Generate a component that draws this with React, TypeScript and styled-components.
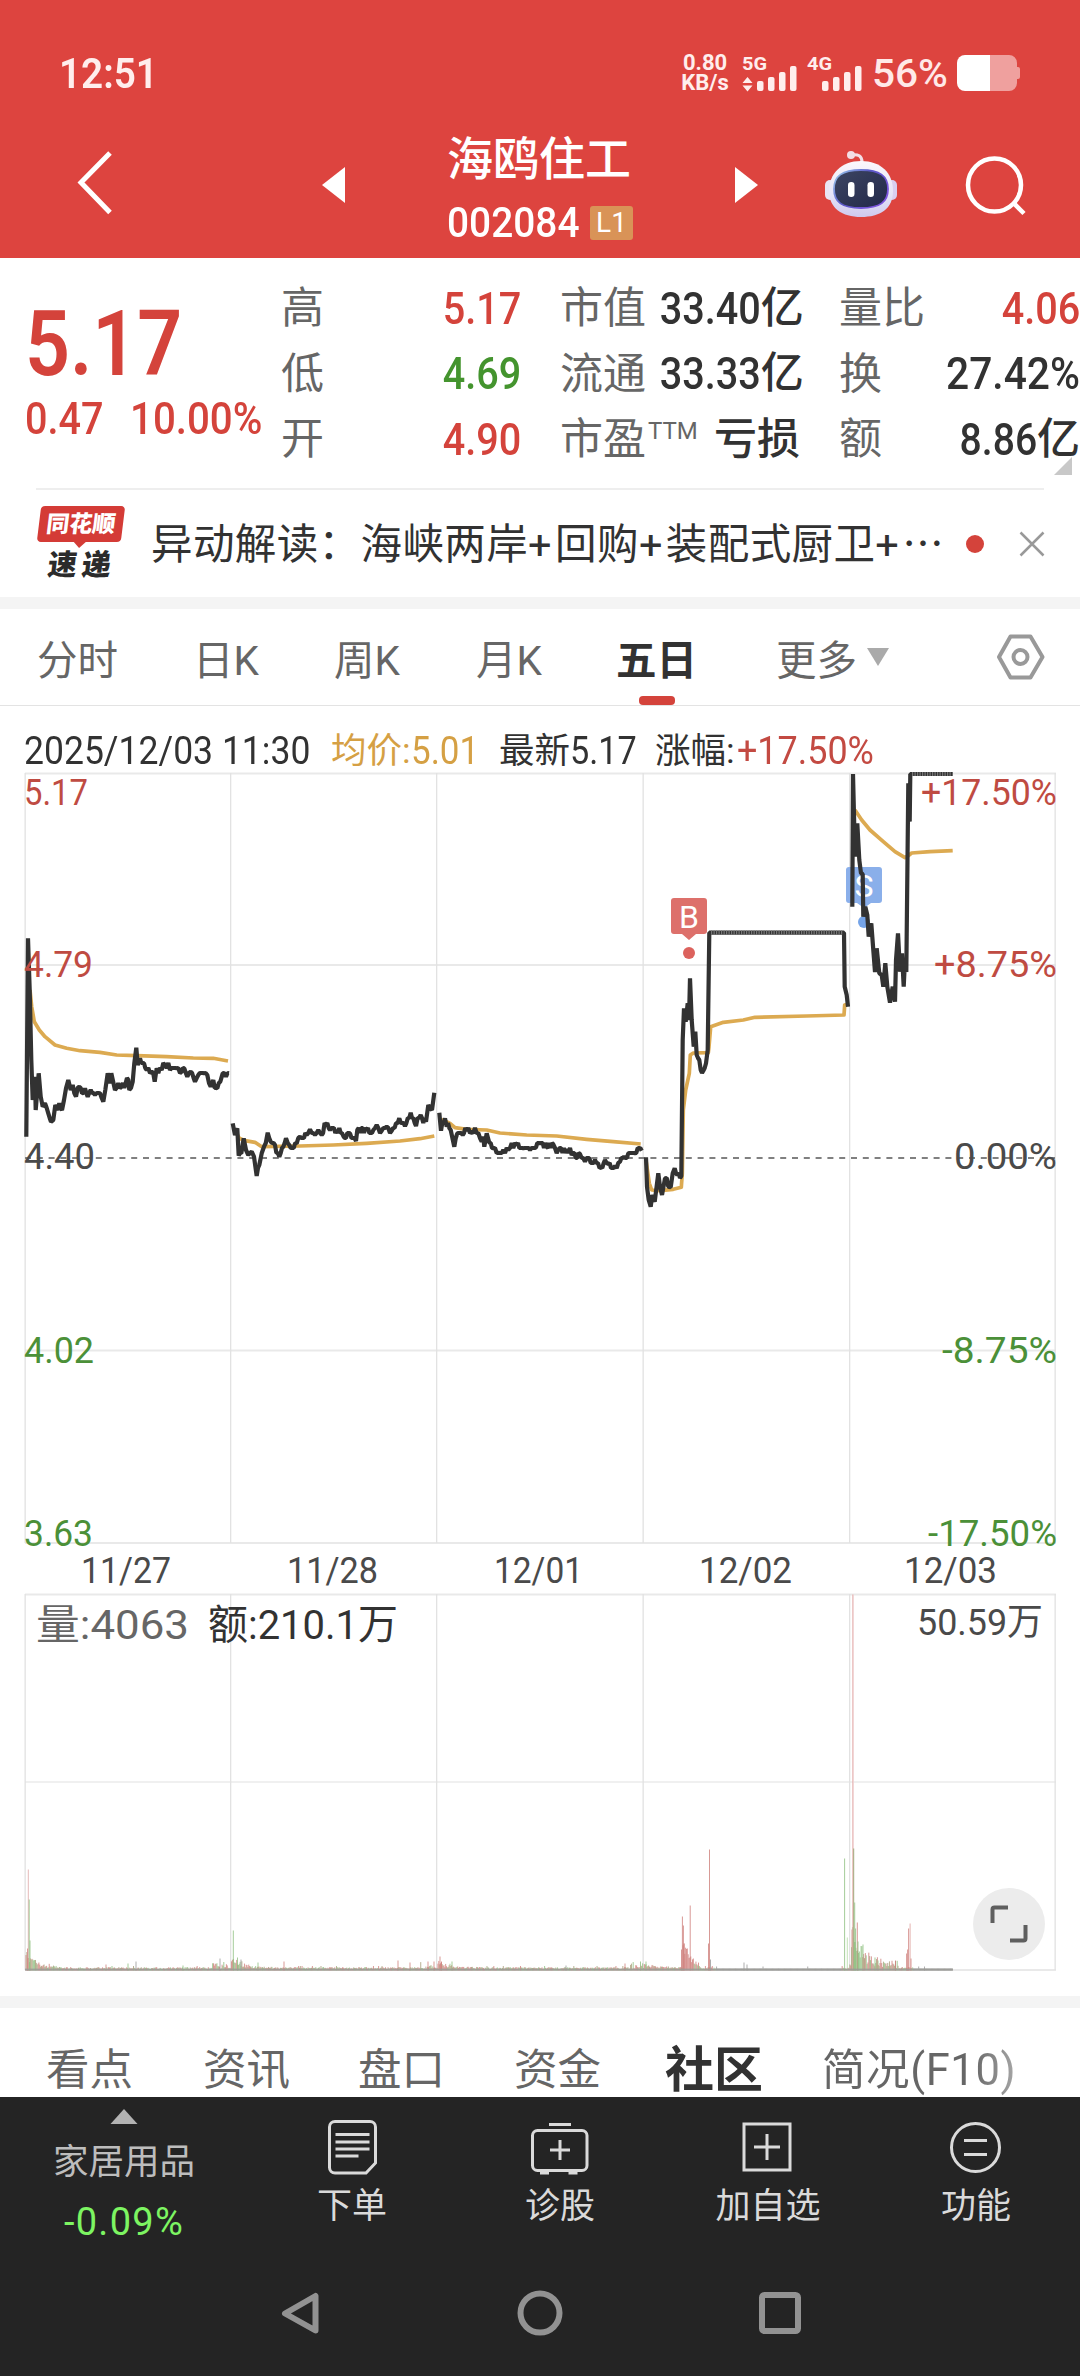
import React from "react";
import styled, { createGlobalStyle } from "styled-components";

const FONT = `Roboto, "Noto Sans CJK SC", sans-serif`;
const RED = "#d4433b";
const GREEN = "#44942e";
const INK = "#323232";
const GRAY = "#666666";

const Global = createGlobalStyle`
  * { box-sizing: border-box; }
  body { margin: 0; background: #fff; font-family: ${FONT}; }
  svg { display: block; flex: none; }
`;

const Screen = styled.div`
  width: 1080px;
  height: 2376px;
  display: flex;
  flex-direction: column;
  overflow: hidden;
  background: #fff;
  white-space: pre;
`;

/* Condensed text: numerals are squeezed horizontally toward one side */
const Num = styled.span<{ $size: number; $sx?: number; $from?: string; $weight?: number; $color?: string }>`
  display: inline-block;
  font-size: ${(p) => p.$size}px;
  font-weight: ${(p) => p.$weight ?? 500};
  color: ${(p) => p.$color ?? "inherit"};
  line-height: 1;
  transform: scaleX(${(p) => p.$sx ?? 1});
  transform-origin: ${(p) => p.$from ?? "left"} center;
`;

/* ---------- status bar + title ---------- */
const Top = styled.header`
  height: 258px;
  flex: none;
  background: #dd443f;
  color: #fff;
`;
const StatusBar = styled.div`
  height: 130px;
  padding: 16px 58px 0 59px;
  display: flex;
  align-items: center;
  color: #ffeeed;
`;
const Speed = styled.div`
  margin-left: auto;
  display: flex;
  flex-direction: column;
  align-items: center;
  width: 48px;
  margin-right: 13px;
  font-weight: 700;
  font-size: 22px;
  line-height: 20px;
`;
const TitleBar = styled.div`
  height: 110px;
  display: grid;
  grid-template-columns: 322px 125px 288px 88px 138px 1fr;
  align-items: center;
`;
const BackCell = styled.div`
  padding-left: 72px;
`;
const TitleBlock = styled.div`
  height: 110px;
  padding-top: 4px;
  display: flex;
  flex-direction: column;
  gap: 18px;
`;
const Name = styled.div`
  font-size: 46px;
  line-height: 50px;
  font-weight: 500;
`;
const CodeLine = styled.div`
  display: grid;
  grid-template-columns: 143px 43px;
  align-items: center;
  height: 40px;
`;
const Level = styled.span`
  height: 34px;
  border-radius: 3px;
  background: #d99357;
  font-size: 28px;
  line-height: 34px;
  text-align: center;
`;

/* ---------- quote ---------- */
const Quote = styled.section`
  position: relative;
  height: 230px;
  flex: none;
  display: flex;
`;
const PriceBlock = styled.div`
  width: 281px;
  padding: 42px 0 0 25px;
  color: ${RED};
`;
const ChangeLine = styled.div`
  display: grid;
  grid-template-columns: 105px 1fr;
  padding-top: 6px;
  line-height: 1;
`;
const Stats = styled.div`
  display: grid;
  grid-template-columns: 240px 240px 241px;
  column-gap: 39px;
  grid-auto-rows: 65.5px;
  padding-top: 17px;
`;
const Stat = styled.div`
  display: flex;
  align-items: center;
  justify-content: space-between;
  font-size: 43px;
  color: ${GRAY};
`;
const StatLabel = styled.span`
  line-height: 65px;
  padding-top: 2px;
`;
const Ttm = styled.sup`
  font-size: 24px;
  line-height: 0;
  vertical-align: 15px;
  margin-left: 2px;
`;
const StatValue = styled.span<{ $color?: string }>`
  display: flex;
  align-items: center;
  font-weight: 500;
  line-height: 65px;
  padding-top: 1px;
  color: ${(p) => p.$color ?? INK};
`;
const Corner = styled.div`
  position: absolute;
  left: 1054px;
  top: 199px;
  width: 18px;
  height: 18px;
  background: #c8c8c8;
  clip-path: polygon(100% 0, 100% 100%, 0 100%);
`;

/* ---------- news ---------- */
const News = styled.section`
  height: 109px;
  flex: none;
  margin: 0 36px;
  border-top: 2px solid #eeeeee;
  display: grid;
  grid-template-columns: 115px 1fr 53px 25px;
  align-items: center;
`;
const Logo = styled.div`
  position: relative;
  width: 90px;
  height: 76px;
`;
const LogoTop = styled.div`
  position: relative;
  height: 36px;
  width: 84px;
  margin-left: 3px;
  border-radius: 4px;
  background: #d43b36;
  color: #fff;
  font-weight: 900;
  font-size: 23px;
  line-height: 37px;
  text-align: center;
  transform: skewX(-7deg);
  &::after {
    content: "";
    position: absolute;
    left: 36px;
    top: 35px;
    border: 7px solid transparent;
    border-top-color: #d43b36;
    border-bottom: 0;
  }
`;
const LogoBottom = styled.div`
  padding-left: 12px;
  font-weight: 900;
  font-size: 29px;
  line-height: 46px;
  letter-spacing: 5px;
  color: #2b2b2b;
  transform: skewX(-7deg);
`;
const Headline = styled.div`
  font-size: 41.5px;
  line-height: 56px;
  letter-spacing: 0.4px;
  padding-top: 2px;
  color: ${INK};
`;
const Plus = styled.span`
  letter-spacing: 3.4px;
`;
const Dot = styled.span`
  width: 18px;
  height: 18px;
  border-radius: 50%;
  background: ${RED};
`;
const Band = styled.div`
  height: 12px;
  flex: none;
  background: #f4f4f4;
`;

/* ---------- period tabs ---------- */
const Periods = styled.nav`
  height: 97px;
  flex: none;
  padding-left: 37px;
  border-bottom: 1px solid #e3e3e3;
  display: grid;
  grid-template-columns: 156px 141px 142px 140px 160px 220px 1fr;
  align-items: center;
`;
const Period = styled.div<{ $on?: boolean }>`
  position: relative;
  height: 96px;
  display: flex;
  align-items: center;
  gap: 9px;
  font-size: 40.5px;
  color: ${(p) => (p.$on ? INK : GRAY)};
  font-weight: ${(p) => (p.$on ? 700 : 400)};
  &::after {
    content: "";
    display: ${(p) => (p.$on ? "block" : "none")};
    position: absolute;
    left: 23px;
    bottom: 0;
    width: 36px;
    height: 9px;
    border-radius: 4px;
    background: ${RED};
  }
`;
const Info = styled.div`
  height: 66px;
  flex: none;
  padding: 24px 0 0 24px;
  display: grid;
  grid-template-columns: 307px 168px 156px 82px 1fr;
  align-items: center;
  font-size: 35.5px;
  color: ${INK};
`;
const InfoItem = styled.span<{ $color?: string }>`
  color: ${(p) => p.$color ?? INK};
  display: flex;
  align-items: center;
  line-height: 42px;
`;

/* ---------- section tabs ---------- */
const Sections = styled.nav`
  height: 89px;
  flex: none;
  padding: 36px 0 0 46px;
  display: grid;
  grid-template-columns: 157px 155px 156px 151px 157px 1fr;
`;
const Section = styled.div<{ $on?: boolean; $fade?: boolean }>`
  font-size: ${(p) => (p.$on ? 49 : 43.5)}px;
  font-weight: ${(p) => (p.$on ? 700 : 400)};
  line-height: 53px;
  color: ${(p) => (p.$on ? INK : GRAY)};
  ${(p) => p.$fade && "width: 200px; letter-spacing: 0.6px; background: linear-gradient(90deg, #666 75%, #aaa 98%); background-clip: text; color: transparent;"}
`;

/* ---------- bottom ---------- */
const Actions = styled.footer`
  height: 153px;
  flex: none;
  background: #242424;
  display: grid;
  grid-template-columns: 248px repeat(4, 208px);
`;
const Action = styled.div`
  display: flex;
  flex-direction: column;
  align-items: center;
  padding-top: 20px;
  color: #dadada;
  font-size: 35px;
  line-height: 44px;
`;
const ActionLabel = styled.div`
  padding-top: 6px;
`;
const Industry = styled.div`
  display: flex;
  flex-direction: column;
  align-items: center;
  padding-top: 12px;
  color: #bdbdbd;
  font-size: 35.5px;
  line-height: 44px;
`;
const IndustryName = styled.div`
  padding-top: 16px;
`;
const IndustryChange = styled.div`
  padding-top: 16px;
  font-size: 38px;
  letter-spacing: 1.3px;
  color: #7df562;
`;
const SystemNav = styled.div`
  height: 126px;
  flex: none;
  background: #242424;
  display: grid;
  grid-template-columns: repeat(3, 240px);
  justify-content: center;
  justify-items: center;
  align-items: center;
`;

/* ---------- chart data ---------- */
type P = [number, number];
/* Points are kept in thirds of a pixel relative to a local origin */
const at = (ox: number, oy: number, s: string): P[] =>
  s.trim().split(/\s+/).map((t) => {
    const [x, y] = t.split(",").map(Number);
    return [ox + x / 3, oy + y / 3] as P;
  });

const noise = (i: number) => {
  const v = Math.sin(i * 127.1 + 11.7) * 43758.5453;
  return v - Math.floor(v) - 0.5;
};

/* Minute samples snapped to the 0.01 price tick (5px); limit-up stretches stay flat */
const ticks = (pts: P[]): string => {
  const out: string[] = [];
  pts.forEach((p, i) => {
    out.push(`${p[0].toFixed(1)},${p[1].toFixed(1)}`);
    const q = pts[i + 1];
    if (!q || Math.abs(q[1] - p[1]) > 14 || q[0] - p[0] > 30) return;
    const n = Math.floor((q[0] - p[0]) / 1.29);
    for (let k = 1; k < n; k++) {
      const x = p[0] + ((q[0] - p[0]) * k) / n;
      const y = p[1] + ((q[1] - p[1]) * k) / n + noise(x) * 6;
      const yy = 1158 + Math.round((y - 1158) / 5) * 5;
      out.push(`${x.toFixed(1)},${yy}`);
    }
  });
  return out.join(" ");
};
const line = (pts: P[]) => pts.map((p) => p.map((v) => v.toFixed(1)).join(",")).join(" ");

const PRICE: P[][] = [
  at(0, 760, "79,1130 84,535 89,690 94,900 98,1020 105,950 107,1050 116,940 122,1010 128,1040 135,1030 145,1060 153,1085 160,1080 166,1035 173,1050 178,1030 186,1050 192,1020 198,985 205,960 212,990 218,975 228,1010 238,980 246,1000 255,985 263,1010 272,990 285,1005 300,1000 310,1025 316,990 323,940 330,970 334,940 345,990 355,970 365,980 385,960 388,990 398,965 403,910 409,863 413,915 420,895 432,910 440,930 455,935 464,965 470,925 485,930 495,915 510,930 530,925 545,935 553,925 562,950 572,935 585,965 595,945 612,940 622,945 632,980 640,960 652,985 661,965 668,940 678,950 687,940"),
  at(0, 760, "698,1090 705,1125 712,1105 716,1187 724,1180 731,1135 738,1170 745,1185 755,1175 762,1190 770,1248 778,1215 785,1180 792,1160 803,1118 812,1145 825,1155 838,1190 850,1160 858,1135 868,1155 890,1150 900,1130 920,1125 930,1108 945,1125 955,1110 965,1125 978,1094 990,1110 1010,1110 1030,1128 1050,1120 1068,1143 1072,1110 1100,1110 1120,1110 1130,1095 1145,1112 1160,1100 1175,1112 1188,1090 1198,1075 1215,1098 1232,1058 1248,1098 1262,1065 1278,1085 1285,1035 1296,1050 1303,998"),
  at(420, 960, "58,458 63,512 75,475 80,500 92,510 103,560 112,520 128,525 140,512 155,515 170,520 185,545 190,530 193,560 200,520 208,548 220,565 235,578 250,570 265,570 275,550 290,555 310,565 330,570 348,562 360,550 380,560 400,553 415,570 440,568 455,585 480,582 495,605 525,600 543,622 555,600 565,612 585,618 600,605 612,590 625,580 645,580 657,565 665,572"),
  [
    ...at(420, 960, "678,592 681,680 686,720 692,740 697,705 704,725 715,640 720,680 726,705 735,655 745,680 752,682 758,640 764,625 772,645 784,648 788,240 792,145 797,185 803,130 807,180 810,55 815,180 821,260 826,215 830,285 838,300 842,330 850,332 858,310 863,270"),
    ...at(640, 760, "208,518 612,518 614,680 620,705 624,740"),
  ],
  at(640, 760, "637,440 639,42 645,290 652,190 658,300 663,340 668,342 670,470 676,440 682,465 686,530 694,490 700,570 705,636 710,565 718,640 725,645 730,680 736,610 742,680 750,728 758,680 765,725 768,600 774,520 780,635 786,580 791,680 795,600 799,636 805,70 809,185 811,42 938,42"),
];
const AVERAGE: P[][] = [
  at(0, 760, "90,690 95,740 103,785 118,810 135,830 165,855 200,865 240,872 300,877 350,885 410,887 500,890 580,894 640,895 684,903"),
  at(0, 760, "705,1110 718,1135 735,1142 765,1147 785,1160 900,1158 1000,1155 1100,1150 1200,1143 1260,1136 1303,1128"),
  at(420, 960, "65,478 90,490 105,503 140,508 200,510 240,519 320,525 410,528 500,538 580,545 662,552"),
  [
    ...at(420, 960, "678,600 688,670 695,690 720,692 760,688 784,682 787,640 790,450 797,390 808,340 811,285 820,279 865,278"),
    ...at(640, 760, "207,860 212,800 250,787 310,780 345,772 500,768 612,765 614,735 622,733"),
  ],
  at(640, 760, "645,150 665,180 690,210 730,245 765,275 795,293 805,287 815,279 870,275 938,272"),
];

const UP = "#d0807c";
const DOWN = "#8fbf7f";
const FLAT = "#9a9a9a";
type Bar = [number, number, string];
const bars = (): Bar[] => {
  const out: Bar[] = [];
  for (let x = 26; x < 953; x += 0.86) {
    const n = Math.abs(noise(x));
    const limit = (x > 716 && x < 842) || x > 913;
    const day = (x - 25) % 206.2;
    let h = n > 0.485 ? 3 + n * 3 : 1.5 + n * 4;
    const open = day < 45 ? Math.exp(-day / 11) : 0;
    h += open * (x < 230 ? 22 : x < 400 ? 14 : x < 600 ? 8 : 6) * (0.4 + n);
    if (x > 851 && x < 900) h += 26 * Math.exp(-(x - 853) / 11) * (0.6 + n) + n * 14;
    if (x > 683 && x < 700) h += 26 * Math.exp(-(x - 683) / 9) * (0.6 + n);
    if ((x > 212 && x < 228) || (x > 420 && x < 434) || (x > 630 && x < 643)) h += n * 8;
    if (limit) h = n > 0.49 ? 4 : 2;
    const near = x > 851 && x < 862;
    const rising = x > 683 && x < 694;
    const c = limit ? FLAT : near ? DOWN : rising ? UP : noise(x + 3) > 0.05 ? UP : noise(x + 5) > 0 ? DOWN : "#a79c78";
    out.push([x, h, c]);
  }
  return out;
};
const SPIKES: Bar[] = [
  [27.5, 22, UP], [28.3, 101, "#dfa9a6"], [29.2, 71, DOWN], [30, 30, DOWN], [106, 6, UP], [128, 7, DOWN], [136, 9, FLAT],
  [183, 5, DOWN], [220, 12, FLAT], [233.3, 40, DOWN], [237.5, 13, DOWN], [241, 11, FLAT], [258, 8, DOWN], [284, 9, UP],
  [398, 10, UP], [410, 8, UP], [428, 9, UP], [434, 9, UP], [440, 14, UP], [441.5, 9, UP], [452, 9, DOWN], [566, 5, FLAT],
  [625, 7, UP], [640.5, 9, DOWN], [646, 9, DOWN], [681.5, 21, UP], [682.4, 54, UP], [683.4, 45, UP], [684.2, 27, UP],
  [690.2, 65, UP], [708.5, 27, UP], [709.5, 121, "#cd7f7a"], [710.5, 11, FLAT], [744, 8, FLAT], [747, 6, FLAT],
  [844.6, 112, DOWN], [847.3, 33, "#b5dca8"], [852, 41, UP], [852.7, 376, "#e3a9a8"], [853.5, 376, "#efcfd0"], [853.7, 122, "#8f9f66"],
  [854.7, 68, DOWN], [855.6, 42, DOWN], [857.3, 48, UP], [858, 29, DOWN], [863, 26, DOWN], [875, 13, DOWN], [878, 10, DOWN],
  [895.5, 10, UP], [906.6, 17, UP], [907.6, 21, UP], [908.6, 42, UP], [910.1, 47, "#dfa19e"], [911, 12, UP], [924.5, 4, FLAT],
];

type LabelProps = { x: number; y: number; w: number; fill: string; size?: number; children: string };
const Label = ({ x, y, w, fill, size = 37, children }: LabelProps) => (
  <text x={x} y={y} fontSize={size} fill={fill} textLength={w} lengthAdjust="spacingAndGlyphs" fontFamily={FONT}>
    {children}
  </text>
);

const Chart = () => (
  <svg width="1080" height="1224" viewBox="0 772 1080 1224">
    <g fill="#e9e9e9">
      {[772.5, 964, 1349.5, 1542, 1593.5, 1781, 1969].map((y) => (
        <rect key={y} x="25" y={y} width="1031" height="2" opacity={y === 1781 ? 0.7 : 1} />
      ))}
    </g>
    <g fill="#e2e2e2">
      {[24.5, 230, 436, 642.5, 849, 1054.5].map((x) => (
        <React.Fragment key={x}>
          <rect x={x} y="773" width="1.3" height="770" />
          <rect x={x} y="1594" width="1.3" height="376" />
        </React.Fragment>
      ))}
    </g>
    <path d="M25 1158H1055" stroke="#808080" strokeWidth="1.8" strokeDasharray="6 5.8" />

    <path d="M849 867h30a3 3 0 0 1 3 3v30a3 3 0 0 1-3 3h-8l-7 5-7-5h-8a3 3 0 0 1-3-3v-30a3 3 0 0 1 3-3z" fill="#8aafea" />
    <circle cx="864" cy="922" r="6" fill="#75a4e8" />
    <text x="864" y="897" fontSize="32" fill="#fff" textAnchor="middle" fontFamily={FONT}>S</text>

    {AVERAGE.map((s, i) => (
      <polyline key={i} points={line(s)} fill="none" stroke="#dcaa51" strokeWidth="3.7" strokeLinejoin="round" />
    ))}
    {PRICE.map((s, i) => (
      <polyline key={i} points={ticks(s)} fill="none" stroke="#323232" strokeWidth="4.2" strokeLinejoin="bevel" />
    ))}
    <path d="M711 932.7H843M912 774H952" stroke="#777" strokeWidth="4.2" strokeDasharray="1.2 1.3" />

    <path d="M674 898h30a3 3 0 0 1 3 3v30a3 3 0 0 1-3 3h-8l-7 6-7-6h-8a3 3 0 0 1-3-3v-30a3 3 0 0 1 3-3z" fill="#dd706b" />
    <circle cx="689" cy="953" r="6" fill="#dc625d" />
    <text x="689" y="928" fontSize="32" fill="#fff" textAnchor="middle" fontFamily={FONT}>B</text>

    <Label x={24} y={805} w={64} fill="#bf4b42">5.17</Label>
    <Label x={24} y={977} w={69} fill="#bf4b42">4.79</Label>
    <Label x={24} y={1169} w={71} fill="#4a4a4a">4.40</Label>
    <Label x={24} y={1363} w={70} fill="#4b9038">4.02</Label>
    <Label x={24} y={1546} w={69} fill="#4b9038">3.63</Label>
    <Label x={921} y={805} w={136} fill="#bf4b42">+17.50%</Label>
    <Label x={934} y={977} w={123} fill="#bf4b42">+8.75%</Label>
    <Label x={954} y={1169} w={103} fill="#4a4a4a">0.00%</Label>
    <Label x={942} y={1363} w={115} fill="#4b9038">-8.75%</Label>
    <Label x={928} y={1546} w={129} fill="#4b9038">-17.50%</Label>

    <Label x={81} y={1583} w={90} fill="#4a4a4a">11/27</Label>
    <Label x={287} y={1583} w={91} fill="#4a4a4a">11/28</Label>
    <Label x={494} y={1583} w={89} fill="#4a4a4a">12/01</Label>
    <Label x={699} y={1583} w={93} fill="#4a4a4a">12/02</Label>
    <Label x={904} y={1583} w={93} fill="#4a4a4a">12/03</Label>

    {bars().concat(SPIKES).map(([x, h, c], i) => (
      <rect key={i} x={x - 0.5} y={1970.5 - h} width="1" height={h} fill={c} opacity="0.8" />
    ))}
    <rect x="25" y="1968.6" width="928" height="2" fill="#9b9b96" opacity="0.85" />

    <Label x={36} y={1639} w={153} size={41} fill={GRAY}>量:4063</Label>
    <Label x={208} y={1639} w={190} size={41} fill={INK}>额:210.1万</Label>
    <Label x={917} y={1635} w={126} size={37} fill="#4a4a4a">50.59万</Label>

    <circle cx="1009" cy="1924" r="36" fill="#ececec" />
    <path d="M992.5 1923v-13.500a2 2 0 0 1 2-2h13.500M1025.500 1925v13.500a2 2 0 0 1-2 2h-13.500" fill="none" stroke="#5f5f5f" strokeWidth="4" />
  </svg>
);

/* ---------- icons ---------- */
const Network = () => (
  <svg width="280" height="40" viewBox="742 53 280 40">
    <g fill="#ffeeed" fontFamily={FONT} fontWeight="700" fontSize="18.500">
      <text x="742" y="69.500" textLength="25" lengthAdjust="spacingAndGlyphs">5G</text>
      <text x="807" y="69.500" textLength="25" lengthAdjust="spacingAndGlyphs">4G</text>
      <path d="M742.500 83l5-6 5 6zM742.500 85.500l5 6 5-6z" />
      {[757, 822].map((x) =>
        [10, 14, 19, 25].map((h, i) => <rect key={x + i} x={x + i * 11} y={91 - h} width="6.500" height={h} rx="2" />)
      )}
    </g>
    <text x="872" y="87" fontFamily={FONT} fontWeight="500" fontSize="38.500" fill="#ffe9e8" textLength="76" lengthAdjust="spacingAndGlyphs">56%</text>
    <path d="M965 55h44a8 8 0 0 1 8 8v4h1a2 2 0 0 1 2 2v8a2 2 0 0 1-2 2h-1v4a8 8 0 0 1-8 8h-44z" fill="#efa09e" />
    <path d="M990 55v36h-25a8 8 0 0 1-8-8V63a8 8 0 0 1 8-8z" fill="#fff" />
  </svg>
);

const Robot = () => (
  <svg width="76" height="72" viewBox="823 148 76 72">
    <defs>
      <linearGradient id="shell" x1="0" y1="0" x2="0" y2="1">
        <stop offset="0" stopColor="#fbf7fb" />
        <stop offset="0.6" stopColor="#e6e4f7" />
        <stop offset="1" stopColor="#cfc9ee" />
      </linearGradient>
      <linearGradient id="rim" x1="0" y1="0" x2="1" y2="0.6">
        <stop offset="0" stopColor="#9fd0ee" />
        <stop offset="0.5" stopColor="#5a58c8" />
        <stop offset="1" stopColor="#7b52dc" />
      </linearGradient>
      <linearGradient id="face" x1="0" y1="0" x2="1" y2="1">
        <stop offset="0" stopColor="#3d4563" />
        <stop offset="1" stopColor="#222849" />
      </linearGradient>
    </defs>
    <path d="M851 154q11-2 11 7v4" fill="none" stroke="#f3dfe6" strokeWidth="3" />
    <circle cx="851" cy="154" r="4" fill="#f3dde4" />
    <rect x="825" y="179" width="10" height="20" rx="5" fill="#e9e4f3" />
    <rect x="887" y="179" width="10" height="20" rx="5" fill="#d9cff0" />
    <path d="M861 160c20 0 32 12 32 30s-13 26-32 26-32-9-32-26 12-30 32-30z" fill="url(#shell)" />
    <path d="M861 169c19 0 27 6 27 19s-8 19-27 19-27-6-27-19 8-19 27-19z" fill="url(#face)" stroke="url(#rim)" strokeWidth="1.800" />
    <rect x="848" y="181" width="6.500" height="15" rx="3.200" fill="#fff" />
    <rect x="867.500" y="181" width="6.500" height="15" rx="3.200" fill="#fff" />
  </svg>
);

const up = { fill: "none", stroke: "#dadada", strokeWidth: 3 };

export default function App() {
  return (
    <Screen>
      <Global />
      <Top>
        <StatusBar>
          <Num $size={43} $sx={0.9} $weight={600}>12:51</Num>
          <Speed>
            <span>0.80</span>
            <span>KB/s</span>
          </Speed>
          <Network />
        </StatusBar>
        <TitleBar>
          <BackCell>
            <svg width="44" height="70" viewBox="72 151 44 70"><path d="M110 154L81 183.500l29 30" fill="none" stroke="#fff" strokeWidth="5" /></svg>
          </BackCell>
          <svg width="24" height="36" viewBox="0 0 24 36"><path d="M23 0v36L0 18z" fill="#fff" /></svg>
          <TitleBlock>
            <Name>海鸥住工</Name>
            <CodeLine>
              <Num $size={42} $sx={0.925}>002084</Num>
              <Level>L1</Level>
            </CodeLine>
          </TitleBlock>
          <svg width="24" height="36" viewBox="0 0 24 36"><path d="M0 0v36l23-18z" fill="#fff" /></svg>
          <Robot />
          <svg width="70" height="70" viewBox="961 150 70 70">
            <circle cx="994.500" cy="185" r="26.500" fill="none" stroke="#fff" strokeWidth="4.500" />
            <path d="M1013 202.500l11 11" stroke="#fff" strokeWidth="4.500" />
          </svg>
        </TitleBar>
      </Top>

      <Quote>
        <PriceBlock>
          <Num $size={90} $sx={0.875} $weight={600}>5.17</Num>
          <ChangeLine>
            <Num $size={45} $sx={0.88}>0.47</Num>
            <Num $size={45} $sx={0.895}>10.00%</Num>
          </ChangeLine>
        </PriceBlock>
        <Stats>
          <Stat><StatLabel>高</StatLabel><StatValue $color={RED}><Num $size={45} $sx={0.88} $from="right">5.17</Num></StatValue></Stat>
          <Stat><StatLabel>市值</StatLabel><StatValue><Num $size={45} $sx={0.88} $from="right">33.40</Num>亿</StatValue></Stat>
          <Stat><StatLabel>量比</StatLabel><StatValue $color={RED}><Num $size={45} $sx={0.88} $from="right">4.06</Num></StatValue></Stat>
          <Stat><StatLabel>低</StatLabel><StatValue $color={GREEN}><Num $size={45} $sx={0.88} $from="right">4.69</Num></StatValue></Stat>
          <Stat><StatLabel>流通</StatLabel><StatValue><Num $size={45} $sx={0.88} $from="right">33.33</Num>亿</StatValue></Stat>
          <Stat><StatLabel>换</StatLabel><StatValue><Num $size={45} $sx={0.905} $from="right">27.42%</Num></StatValue></Stat>
          <Stat><StatLabel>开</StatLabel><StatValue $color={RED}><Num $size={45} $sx={0.88} $from="right">4.90</Num></StatValue></Stat>
          <Stat><StatLabel>市盈<Ttm>TTM</Ttm></StatLabel><StatValue>亏损</StatValue></Stat>
          <Stat><StatLabel>额</StatLabel><StatValue><Num $size={45} $sx={0.87} $from="right">8.86</Num>亿</StatValue></Stat>
        </Stats>
        <Corner />
      </Quote>

      <News>
        <Logo>
          <LogoTop>同花顺</LogoTop>
          <LogoBottom>速递</LogoBottom>
        </Logo>
        <Headline>异动解读：海峡两岸<Plus>+</Plus>回购<Plus>+</Plus>装配式厨卫<Plus>+</Plus>⋯</Headline>
        <Dot />
        <svg width="26" height="26" viewBox="0 0 26 26"><path d="M1.500 1.500l23 23M24.500 1.500l-23 23" stroke="#999" strokeWidth="2.500" /></svg>
      </News>
      <Band />

      <Periods>
        <Period>分时</Period>
        <Period>日K</Period>
        <Period>周K</Period>
        <Period>月K</Period>
        <Period $on>五日</Period>
        <Period>
          更多
          <svg width="24" height="18" viewBox="0 0 24 18"><path d="M1 0h22L12 18z" fill="#aaaaaa" /></svg>
        </Period>
        <svg width="50" height="48" viewBox="0 0 50 48">
          <path d="M14.500 3.500h20l12 20.500-12 20.500h-20L3 24z" fill="none" stroke="#999" strokeWidth="4" strokeLinejoin="round" />
          <circle cx="24.500" cy="24" r="7" fill="none" stroke="#999" strokeWidth="4" />
        </svg>
      </Periods>

      <Info>
        <InfoItem><Num $size={38} $sx={0.935} $weight={400}>2025/12/03 11:30</Num></InfoItem>
        <InfoItem $color="#d5a044">均价:<Num $size={38} $sx={0.92} $weight={400}>5.01</Num></InfoItem>
        <InfoItem>最新<Num $size={38} $sx={0.9} $weight={400}>5.17</Num></InfoItem>
        <InfoItem>涨幅:</InfoItem>
        <InfoItem $color="#c34a42"><Num $size={38} $sx={0.945} $weight={400}>+17.50%</Num></InfoItem>
      </Info>

      <Chart />
      <Band />

      <Sections>
        <Section>看点</Section>
        <Section>资讯</Section>
        <Section>盘口</Section>
        <Section>资金</Section>
        <Section $on>社区</Section>
        <Section $fade>简况(F10)</Section>
      </Sections>

      <Actions>
        <Industry>
          <svg width="28" height="15" viewBox="0 0 28 15"><path d="M14 0l13.500 15H.5z" fill="#b3b3b3" /></svg>
          <IndustryName>家居用品</IndustryName>
          <IndustryChange>-0.09%</IndustryChange>
        </Industry>
        <Action>
          <svg width="60" height="62" viewBox="322 2117 60 62">
            <path {...up} d="M335 2121.500h35a5.500 5.500 0 0 1 5.500 5.500v36l-9.500 10h-31a5.500 5.500 0 0 1-5.500-5.500V2127a5.500 5.500 0 0 1 5.500-5.500z" />
            <path {...up} d="M335.500 2134.500h34M335.500 2142h34M335.500 2149h34M335.500 2156h23" />
          </svg>
          <ActionLabel>下单</ActionLabel>
        </Action>
        <Action>
          <svg width="60" height="62" viewBox="530 2117 60 62">
            <rect {...up} x="532.500" y="2130.500" width="54.500" height="40" rx="5" />
            <path {...up} d="M549 2124.500h22M560 2140v20M550 2150h20M540 2173h9M568.500 2173h9" />
          </svg>
          <ActionLabel>诊股</ActionLabel>
        </Action>
        <Action>
          <svg width="60" height="62" viewBox="738 2117 60 62">
            <rect {...up} x="744" y="2124" width="46" height="46" />
            <path {...up} d="M767 2134v26M754 2147h26" />
          </svg>
          <ActionLabel>加自选</ActionLabel>
        </Action>
        <Action>
          <svg width="60" height="62" viewBox="946 2117 60 62">
            <circle {...up} cx="975.500" cy="2147.500" r="24" />
            <path {...up} d="M964 2140.500h23M964 2154.500h23" />
          </svg>
          <ActionLabel>功能</ActionLabel>
        </Action>
      </Actions>
      <SystemNav>
        <svg width="44" height="46" viewBox="278 2290 44 46"><path d="M315.500 2296v34.500L285 2313.500z" fill="none" stroke="#929292" strokeWidth="6" strokeLinejoin="round" /></svg>
        <svg width="46" height="46" viewBox="0 0 46 46"><circle cx="23" cy="23" r="19.500" fill="none" stroke="#929292" strokeWidth="6" /></svg>
        <svg width="46" height="46" viewBox="0 0 46 46"><rect x="5" y="5" width="36" height="36" rx="2.500" fill="none" stroke="#929292" strokeWidth="6" /></svg>
      </SystemNav>
    </Screen>
  );
}
